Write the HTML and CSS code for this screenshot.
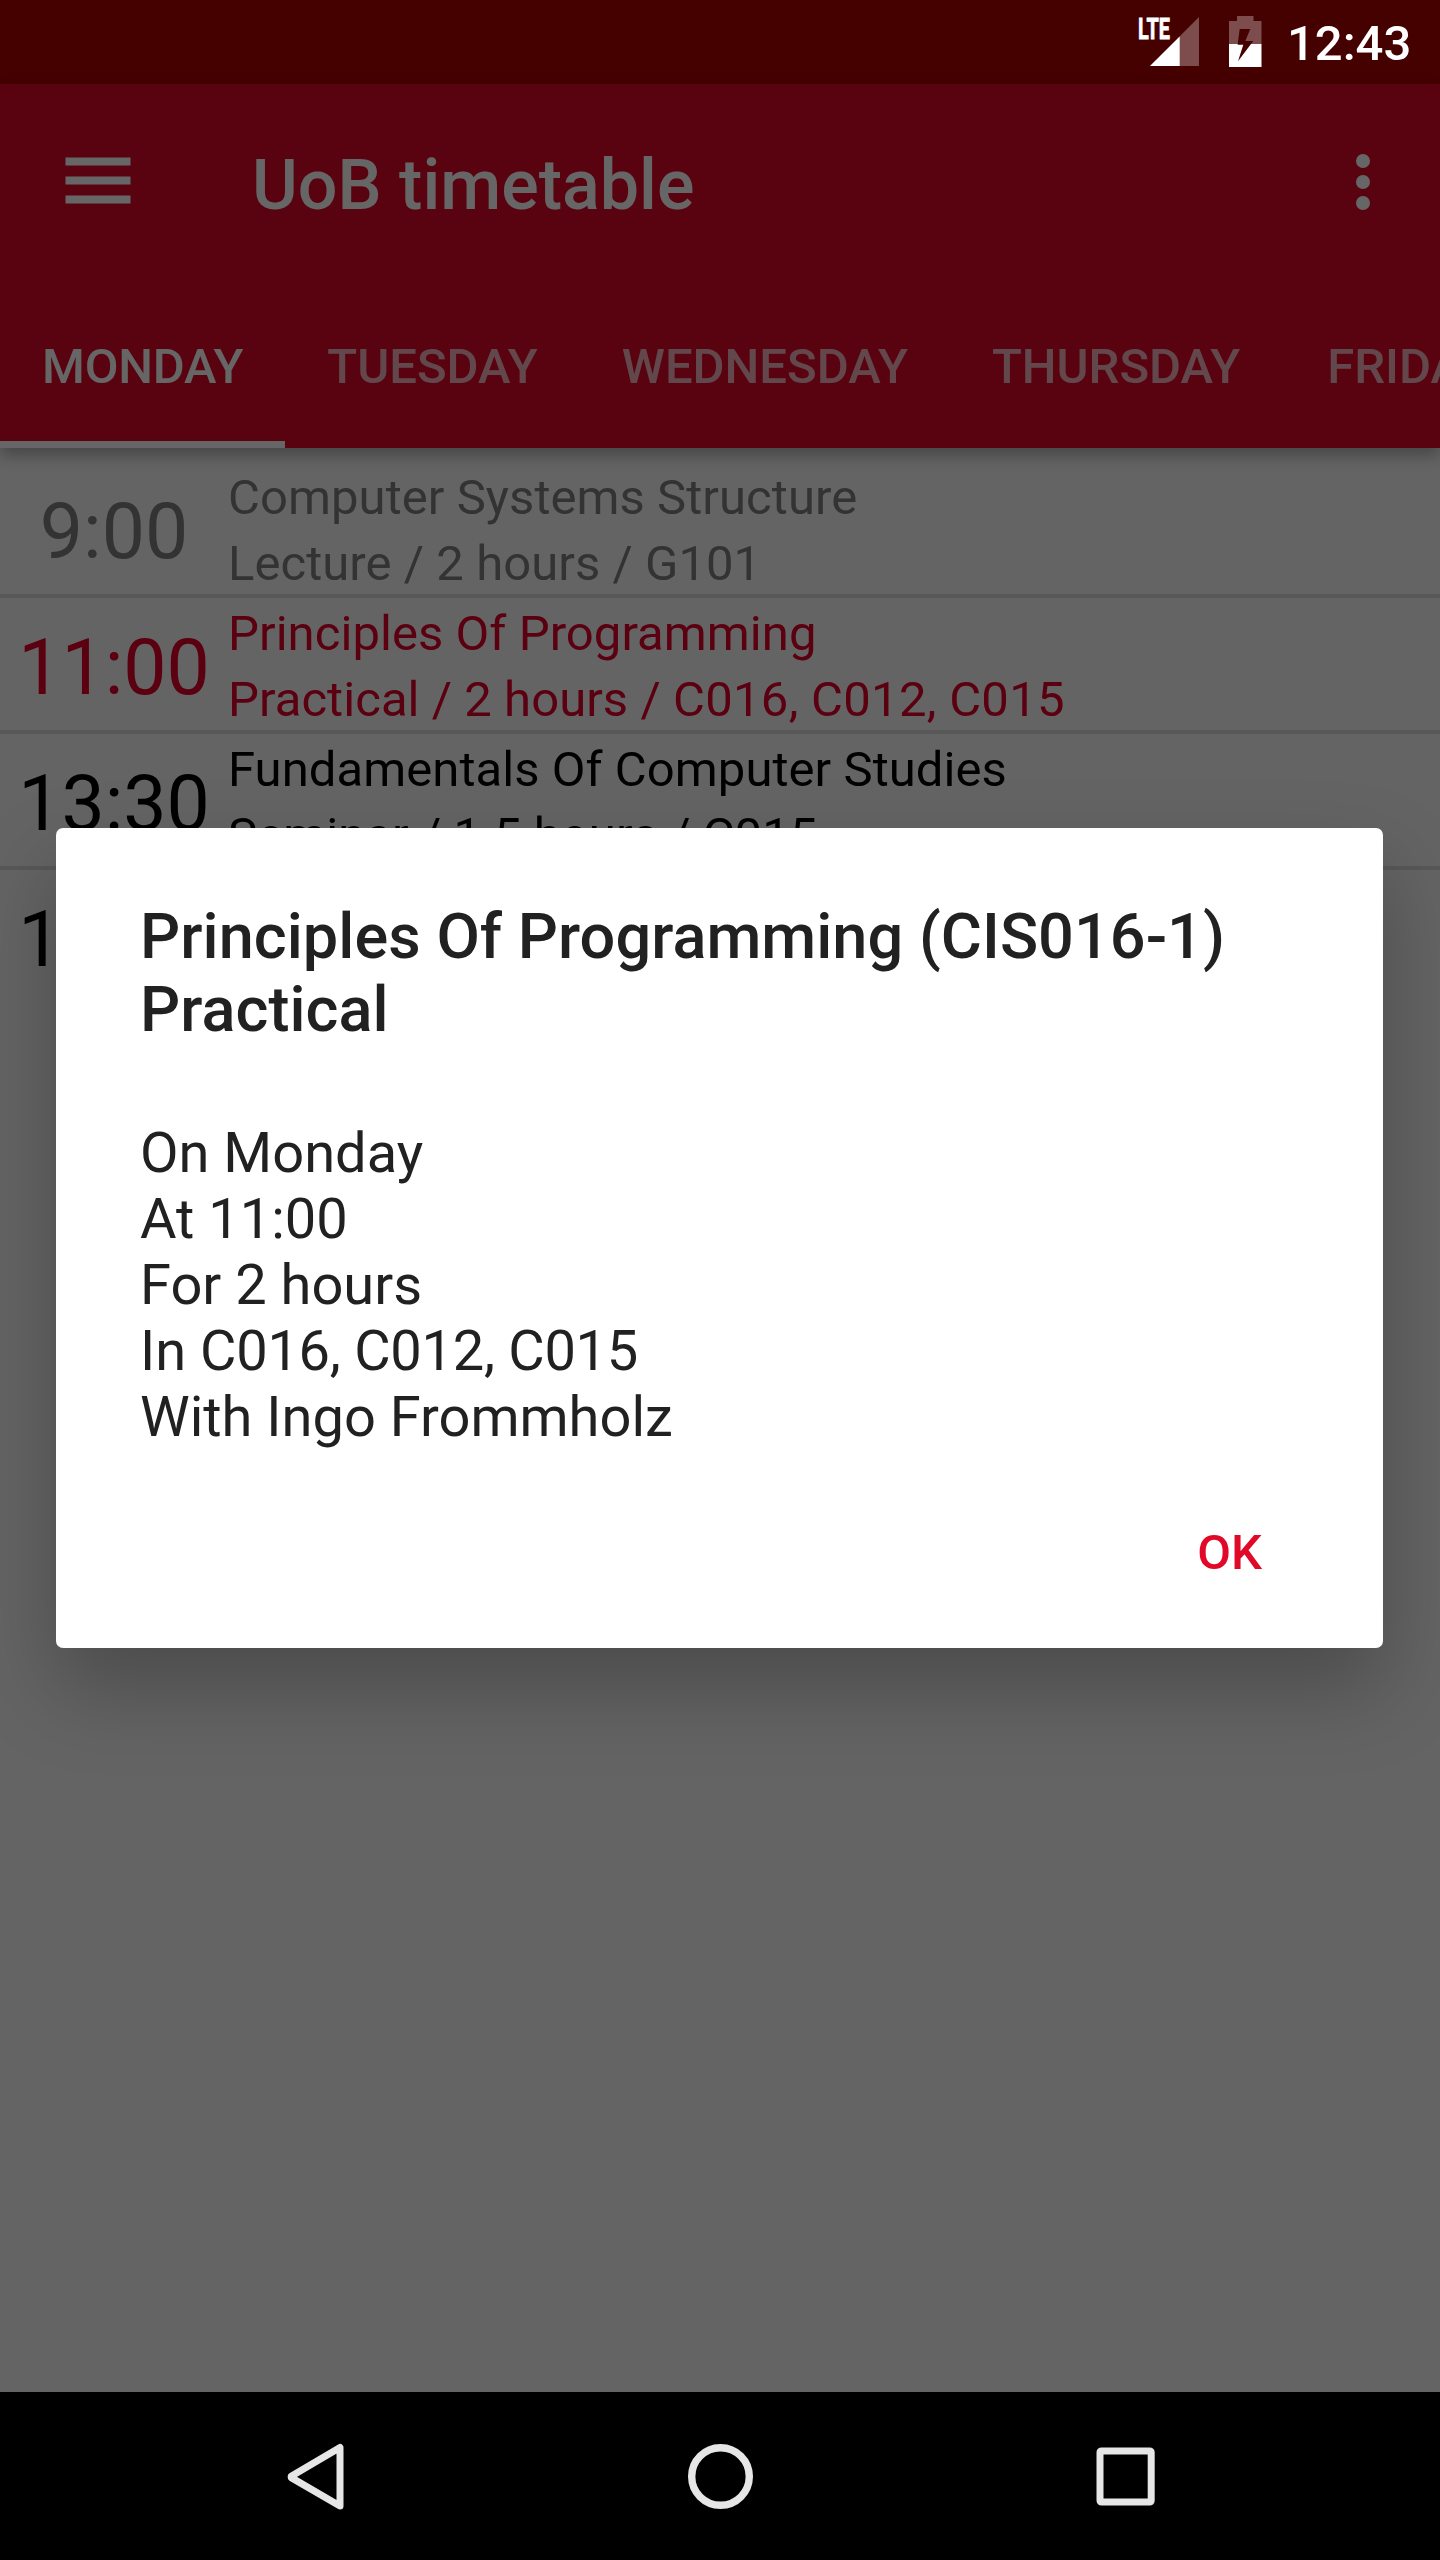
FILE: index.html
```html
<!DOCTYPE html>
<html lang="en">
<head>
<meta charset="utf-8">
<title>UoB timetable</title>
<link rel="stylesheet" href="styles.css">
</head>
<body>
<div class="screen">
  <div class="status-bar">
    <svg class="status-signal" width="64" height="54" viewBox="0 0 64 54">
      <text class="lte" x="2" y="24" textLength="32" lengthAdjust="spacingAndGlyphs">LTE</text>
      <path d="M63 2V51H14Z" fill="#fff" fill-opacity=".3"/>
      <path d="M43.7 21.5V51H14Z" fill="#fff"/>
    </svg>
    <svg class="status-battery" width="33" height="51" viewBox="0 0 33 51">
      <path d="M8 0h16.500v5h8v23H22L24.300 25H16.300L21.300 13H10.700L8.700 28H0V5h8z" fill="#fff" fill-opacity=".3"/>
      <path d="M0 28H8.700V28.700H14.300L9 45.300L22 28H32.500V51H0z" fill="#fff"/>
    </svg>
    <span class="clock">12:43</span>
  </div>

  <header class="app-bar">
    <div class="toolbar">
      <svg class="menu-icon" width="66" height="48" viewBox="0 0 66 48">
        <path d="M.500 1.500h65v8H.500zM.500 20.500h65v8H.500zM.500 39.500h65v8H.500z" fill="#fff"/>
      </svg>
      <h1 class="app-title">UoB timetable</h1>
      <svg class="more-icon" width="14" height="56" viewBox="0 0 14 56">
        <circle cx="7" cy="7" r="7" fill="#fff"/>
        <circle cx="7" cy="28" r="7" fill="#fff"/>
        <circle cx="7" cy="49" r="7" fill="#fff"/>
      </svg>
    </div>
    <nav class="tabs">
      <span class="tab tab-active">MONDAY</span>
      <span class="tab">TUESDAY</span>
      <span class="tab">WEDNESDAY</span>
      <span class="tab tab-thursday">THURSDAY</span>
      <span class="tab">FRIDAY</span>
    </nav>
  </header>

  <main class="list">
    <div class="row row-past">
      <div class="time">9:00</div>
      <div class="info"><div>Computer Systems Structure</div><div>Lecture / 2 hours / G101</div></div>
    </div>
    <div class="row row-current">
      <div class="time">11:00</div>
      <div class="info"><div>Principles Of Programming</div><div>Practical / 2 hours / <span class="rooms">C016, C012, C015</span></div></div>
    </div>
    <div class="row">
      <div class="time">13:30</div>
      <div class="info"><div>Fundamentals Of Computer Studies</div><div>Seminar / 1.5 hours / C015</div></div>
    </div>
    <div class="row row-last">
      <div class="time">15:00</div>
    </div>
  </main>

  <div class="nav-bar">
    <svg width="70" height="70" viewBox="0 0 70 70"><path d="M60 5.500V64L11.200 35.600V34.200Z" fill="none" stroke="#e6e6e6" stroke-width="7" stroke-linejoin="round"/></svg>
    <svg width="70" height="70" viewBox="0 0 70 70"><circle cx="35.500" cy="34.500" r="28.800" fill="none" stroke="#e6e6e6" stroke-width="7.400"/></svg>
    <svg width="70" height="70" viewBox="0 0 70 70"><rect x="10" y="8.900" width="51.200" height="51.200" rx="1.500" fill="none" stroke="#e6e6e6" stroke-width="7"/></svg>
  </div>

  <div class="scrim">
    <div class="dialog">
      <h2 class="dialog-title">Principles Of Programming (CIS016-1)<br>Practical</h2>
      <p class="dialog-body">On Monday<br>At 11:00<br>For 2 hours<br>In <span class="dialog-rooms">C016, C012, C015</span><br>With Ingo Frommholz</p>
      <div class="dialog-actions"><span class="ok">OK</span></div>
    </div>
  </div>
</div>
</body>
</html>
```
FILE: styles.css
```css
* { box-sizing: border-box; }

body {
  margin: 0;
  font-family: Roboto, "Noto Sans", sans-serif;
}

.screen {
  position: relative;
  display: flex;
  flex-direction: column;
  width: 1440px;
  height: 2560px;
  overflow: hidden;
  background: #fafafa;
}

/* status bar */
.status-bar {
  display: flex;
  align-items: flex-start;
  justify-content: flex-end;
  height: 84px;
  padding: 15px 28px 0 0;
  background: #450000;
  color: #fff;
}
.status-signal { overflow: visible; }
.status-battery { margin: 1px 0 0 29px; }
.lte {
  font: 700 29.5px Roboto, sans-serif;
  fill: #fff;
  stroke: #fff;
  stroke-width: .8px;
}
.clock {
  width: 125px;
  margin: -4px 0 0 25px;
  font-size: 49px;
  font-weight: 500;
  line-height: 66px;
}

/* app bar */
.app-bar {
  z-index: 1;
  height: 364px;
  background: #e10928;
  color: #fff;
  box-shadow: 0 7px 16px rgba(0, 0, 0, .32);
}
.toolbar {
  display: flex;
  align-items: center;
  height: 196px;
  padding: 0 70px 0 65px;
}
.menu-icon { margin-top: -4px; }
.app-title {
  flex: 1;
  margin: 0;
  padding: 6px 0 0 121px;
  font-size: 70px;
  font-weight: 500;
  line-height: 82px;
}
.tabs {
  display: flex;
  height: 168px;
  overflow: hidden;
}
.tab {
  flex: none;
  padding: 5px 42px 0;
  font-size: 49px;
  font-weight: 500;
  line-height: 163px;
  color: rgba(255, 255, 255, .7);
}
.tab-active {
  color: #fff;
  letter-spacing: -.2px;
  box-shadow: inset 0 -7px #fff;
}
.tab-thursday { margin-right: 3px; }

/* timetable */
.list {
  flex: 1;
  padding-top: 14px;
}
.row {
  display: flex;
  height: 136px;
  border-bottom: 4px solid #dcdcdc;
  color: #000;
}
.row-past { color: #808080; }
.row-current { color: #e10028; }
.row-last { border-bottom: 0; }
.time {
  width: 228px;
  padding-top: 4px;
  font-size: 77px;
  line-height: 132px;
  text-align: center;
}
.info {
  padding-top: 3px;
  font-size: 49px;
  letter-spacing: .06px;
  line-height: 66px;
  white-space: nowrap;
}
.rooms { letter-spacing: .3px; }

/* system navigation */
.nav-bar {
  z-index: 3;
  display: flex;
  align-items: center;
  justify-content: space-between;
  height: 168px;
  padding: 2px 280px 0;
  background: #000;
}

/* modal dialog over the page, between the system bars */
.scrim {
  position: absolute;
  inset: 84px 0 168px;
  z-index: 2;
  padding: 744px 57px 0 56px;
  background: rgba(0, 0, 0, .6);
}
.dialog {
  height: 820px;
  padding: 72px 84px 0;
  border-radius: 7px;
  background: #fff;
  color: #212121;
  box-shadow: 0 40px 84px rgba(0, 0, 0, .25);
}
.dialog-title {
  margin: 0;
  font-size: 63px;
  font-weight: 500;
  letter-spacing: .05px;
  line-height: 73px;
  white-space: nowrap;
}
.dialog-body {
  margin: 74px 0 70px;
  font-size: 56px;
  line-height: 66px;
}
.dialog-rooms { letter-spacing: -.28px; }
.dialog-actions {
  display: flex;
  justify-content: flex-end;
  padding-right: 37px;
}
.ok {
  font-size: 49px;
  font-weight: 500;
  line-height: 66px;
  color: #e10928;
}
```
